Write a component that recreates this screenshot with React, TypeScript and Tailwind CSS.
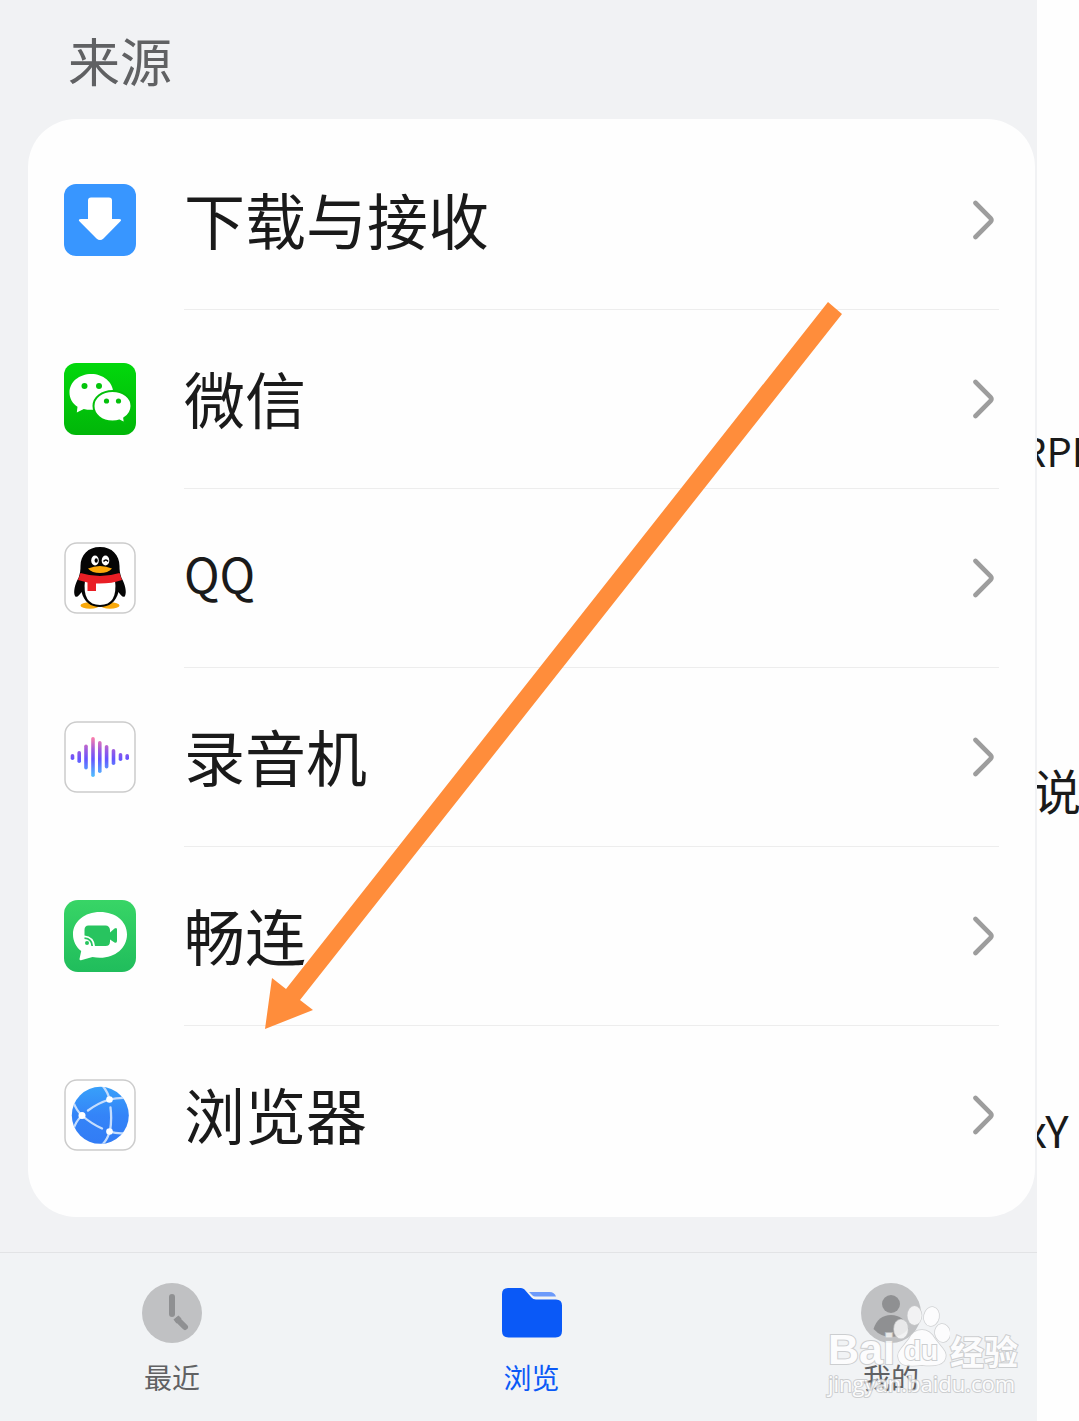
import type { ReactNode } from "react";

function DownloadIcon() {
  return (
    <svg viewBox="0 0 72 72" className="size-[72px] shrink-0" aria-hidden="true">
      <rect width="72" height="72" rx="12" fill="#3896ff" />
      <path
        d="M27 13.500h18q3 0 3 3V35h7q3.500 0 1.200 2.500L39.500 54.500q-3.500 3-7 0L15.600 37.500Q13.500 35 17 35h7V16.500q0-3 3-3Z"
        fill="#fff"
      />
    </svg>
  );
}

function WeChatIcon() {
  return (
    <svg viewBox="0 0 72 72" className="size-[72px] shrink-0" aria-hidden="true">
      <defs>
        <linearGradient id="wechat" x1="0" y1="0" x2="0" y2="1">
          <stop offset="0" stopColor="#02d80c" />
          <stop offset="1" stopColor="#01b609" />
        </linearGradient>
      </defs>
      <rect width="72" height="72" rx="12" fill="url(#wechat)" />
      <path
        d="M27.500 11C15 11 5.500 19 5.500 29.500c0 6 3 11 8 14.200L12.800 49.500l7-3.600c3 .8 6.200 1 9.500.8l20-17C49 19 39 11 27.500 11Z"
        fill="#fff"
      />
      <circle cx="20.500" cy="23" r="3" fill="#03c50b" />
      <circle cx="35" cy="23" r="3" fill="#03c50b" />
      <path
        d="M48.500 28C38 28 29.500 34.500 29.500 43s8 15.500 19 15.500c2.500 0 5-.3 7-1l5.500 3-.8-5.300C64.500 52.500 67.500 48 67.500 43c0-8.500-8.500-15-19-15Z"
        fill="#fff"
        stroke="#02bf0a"
        strokeWidth="2"
      />
      <circle cx="42.500" cy="38" r="2.600" fill="#03c00b" />
      <circle cx="54.500" cy="38" r="2.600" fill="#03c00b" />
    </svg>
  );
}

function QQIcon() {
  return (
    <svg viewBox="0 0 72 72" className="size-[72px] shrink-0" aria-hidden="true">
      <rect x="1" y="1" width="70" height="70" rx="12" fill="#fff" stroke="#ccc" strokeWidth="1.500" />
      <ellipse cx="26" cy="63.500" rx="9.500" ry="3.300" fill="#f9a90c" />
      <ellipse cx="46" cy="63.500" rx="9.500" ry="3.300" fill="#f9a90c" />
      <path
        d="M36 5C24 5 16.500 13 16.500 24c0 4-.3 7-2 12C11 42 9 50 11 54c1.600 2.500 4.500-1 6.500-4C20 60 27 65 36 65s16-5 18.500-15c2 3 5 6.500 6.500 4 2-4 0-12-3.500-18-1.700-5-2-8-2-12C55.500 13 48 5 36 5Z"
        fill="#050505"
      />
      <path d="M21 38h30q3 25-15 25T21 38Z" fill="#fff" />
      <path d="M16.500 31q19.500 6 39 0l2.500 7q-11 4-26 3.500v7.500h-8.500v-8.500L14 38Z" fill="#e91e25" />
      <ellipse cx="31" cy="18.500" rx="3.800" ry="5" fill="#fff" />
      <ellipse cx="41.500" cy="18.500" rx="3.800" ry="5" fill="#fff" />
      <ellipse cx="32.200" cy="18.500" rx="1.600" ry="2.300" fill="#000" />
      <path d="M39.500 19.500q2.500-3 4.500 0" fill="none" stroke="#000" strokeWidth="1.500" />
      <path d="M24 26.500q12-5 24 0-4 4.500-12 4.500t-12-4.500Z" fill="#fba80a" />
    </svg>
  );
}

const waveBars = [
  { x: 8.5, top: 34, bottom: 38 },
  { x: 15.2, top: 31, bottom: 41 },
  { x: 22, top: 24.5, bottom: 47.5 },
  { x: 29, top: 17, bottom: 55 },
  { x: 35.8, top: 21, bottom: 51 },
  { x: 42.6, top: 25, bottom: 46.5 },
  { x: 49.5, top: 29, bottom: 43 },
  { x: 56.5, top: 33, bottom: 39 },
  { x: 63.2, top: 34, bottom: 38 },
];

function RecorderIcon() {
  return (
    <svg viewBox="0 0 72 72" className="size-[72px] shrink-0" aria-hidden="true">
      <defs>
        <linearGradient id="wave" gradientUnits="userSpaceOnUse" x1="0" y1="16" x2="0" y2="56">
          <stop offset="0" stopColor="#ff7fa8" />
          <stop offset="0.300" stopColor="#a25ddc" />
          <stop offset="0.550" stopColor="#6653ff" />
          <stop offset="1" stopColor="#4fc3ff" />
        </linearGradient>
      </defs>
      <rect x="1" y="1" width="70" height="70" rx="12" fill="#fff" stroke="#ccc" strokeWidth="1.500" />
      {waveBars.map((bar) => (
        <rect
          key={bar.x}
          x={bar.x - 1.8}
          y={bar.top - 1}
          width="3.600"
          height={bar.bottom - bar.top + 2}
          rx="1.800"
          fill="url(#wave)"
        />
      ))}
    </svg>
  );
}

function MeeTimeIcon() {
  return (
    <svg viewBox="0 0 72 72" className="size-[72px] shrink-0" aria-hidden="true">
      <defs>
        <linearGradient id="meetime" x1="0" y1="0" x2="0" y2="1">
          <stop offset="0" stopColor="#38d566" />
          <stop offset="1" stopColor="#20bd5c" />
        </linearGradient>
      </defs>
      <rect width="72" height="72" rx="14" fill="url(#meetime)" />
      <path
        d="M36 12C20.500 12 9 21.500 9 34.500c0 6.500 3 12.500 8.200 16.500L15.500 59q0 1.500 1.500 1.200L28.500 57c2.500.5 5 .8 7.500.8 15.500 0 27-10 27-23.300S51.500 12 36 12Z"
        fill="#fff"
      />
      <path
        d="M24.500 25.500h17q4 0 4.500 4.500v2.500l4.500-4q2.500-1.500 2.500 1v11.500q0 2.500-2.500 1.500l-4.500-3v2q0 4.500-4.500 4.500H31q-1-9.500-10.500-10.500v-5.500q0-4.500 4-4.500Z"
        fill="#28c45f"
      />
      <circle cx="23" cy="43" r="2" fill="#28c45f" />
      <path d="M20.500 38.200q7.300.5 7.700 7.800" fill="none" stroke="#28c45f" strokeWidth="1.800" />
    </svg>
  );
}

function BrowserIcon() {
  return (
    <svg viewBox="0 0 72 72" className="size-[72px] shrink-0" aria-hidden="true">
      <defs>
        <linearGradient id="globe" x1="0" y1="0" x2="0" y2="1">
          <stop offset="0" stopColor="#38a0fa" />
          <stop offset="0.500" stopColor="#3484f8" />
          <stop offset="1" stopColor="#327cf5" />
        </linearGradient>
        <clipPath id="globe-clip">
          <circle cx="36.300" cy="36.300" r="28.500" />
        </clipPath>
      </defs>
      <rect x="1" y="1" width="70" height="70" rx="12" fill="#fff" stroke="#ccc" strokeWidth="1.500" />
      <circle cx="36.300" cy="36.300" r="28.500" fill="url(#globe)" />
      <g clipPath="url(#globe-clip)" fill="none" stroke="#c5ddfd" strokeWidth="2.300" strokeLinecap="round">
        <path d="M24 31.500q10-7.500 21.500-11M45.500 20.500Q44 13 38 6M45.500 20.500q8-2 18-1.500" />
        <path d="M18 36.500Q12 31 9 22M18 36.500Q11 43 9 52M18 36.500q9 8 20 13" />
        <path d="M46.500 28.500q1.500 12-.5 23.500M45.500 52.500q-1.500 7-7 13M45.500 52.500q8 2.500 17 1.500" />
      </g>
      <circle cx="45.500" cy="20.500" r="3.300" fill="#fff" />
      <circle cx="18" cy="36.500" r="3.500" fill="#fff" />
      <circle cx="45.500" cy="52.500" r="3.300" fill="#fff" />
    </svg>
  );
}

function Chevron() {
  return (
    <svg viewBox="0 0 24 42" className="h-[42px] w-6 shrink-0" fill="none" aria-hidden="true">
      <path
        d="M4.500 4 19.500 19Q21.300 21 19.500 23L4.500 38"
        stroke="#9d9d9d"
        strokeWidth="4.600"
        strokeLinecap="round"
      />
    </svg>
  );
}

const sources: { name: string; icon: ReactNode }[] = [
  { name: "下载与接收", icon: <DownloadIcon /> },
  { name: "微信", icon: <WeChatIcon /> },
  { name: "QQ", icon: <QQIcon /> },
  { name: "录音机", icon: <RecorderIcon /> },
  { name: "畅连", icon: <MeeTimeIcon /> },
  { name: "浏览器", icon: <BrowserIcon /> },
];

function ClockIcon() {
  return (
    <svg viewBox="0 0 60 60" className="size-[60px]" aria-hidden="true">
      <circle cx="30" cy="30" r="30" fill="#c0c1c3" />
      <path d="M30 14v17" stroke="#8f9092" strokeWidth="6" strokeLinecap="round" />
      <path d="m36 37 7 7" stroke="#8f9092" strokeWidth="6" strokeLinecap="round" />
      <path d="m31.500 36.500 5-4 3 3-5 5Z" fill="#8f9092" />
    </svg>
  );
}

function FolderIcon() {
  return (
    <svg viewBox="0 0 60 60" className="size-[60px]" aria-hidden="true">
      <path
        d="M6 5h13q2 0 3.500 1.500l7 8Q31 16.500 34 16.500h20q6 0 6 6V48q0 6.500-6.500 6.500h-47Q0 54.500 0 48V11q0-6 6-6Z"
        fill="#0a59f7"
      />
      <path d="M27 9h20.500q5 0 6.500 4.500H33q-1.500 0-2.500-1Z" fill="#6c9afa" />
    </svg>
  );
}

function PersonIcon() {
  return (
    <svg viewBox="0 0 60 60" className="size-[60px]" aria-hidden="true">
      <circle cx="30" cy="30" r="30" fill="#c0c1c3" />
      <circle cx="30" cy="21" r="9" fill="#8f9092" />
      <path d="M12.500 46Q17 32 30 32t17.500 14Q40 54 30 54t-17.500-8Z" fill="#8f9092" />
    </svg>
  );
}

const tabs = [
  { name: "最近", icon: <ClockIcon />, color: "text-[#606163]" },
  { name: "浏览", icon: <FolderIcon />, color: "text-[#0a59f7]" },
  { name: "我的", icon: <PersonIcon />, color: "text-[#606163]" },
];

function Watermark() {
  return (
    <div className="pointer-events-none absolute right-[59px] bottom-6 w-48 text-white opacity-80 [paint-order:stroke] [-webkit-text-stroke:2px_#c4c5c7]">
      <div className="flex h-[66px] items-end">
        <span className="w-[64px] font-['Liberation_Sans'] text-[43px] leading-10 font-bold">
          Bai
        </span>
        <div className="relative h-[66px] w-[58px]">
          <svg viewBox="0 0 58 66" className="h-[66px] w-[58px]" aria-hidden="true">
            <g fill="#fff" stroke="#c9cacc" strokeWidth="1.500">
              <ellipse cx="9" cy="26" rx="7" ry="9.500" />
              <ellipse cx="22.500" cy="12.500" rx="7" ry="9.500" />
              <ellipse cx="39.500" cy="13.500" rx="7.500" ry="9.500" transform="rotate(12 39.500 13.500)" />
              <ellipse cx="50.500" cy="30" rx="7.500" ry="9" transform="rotate(-8 50.500 30)" />
              <path d="M30 27q8 0 13 9l8 10q5 6 1 12-5 6-22 4-17 2-21-2-6-7 0-14l8-10q4-9 13-9Z" />
            </g>
          </svg>
          <span className="absolute inset-x-0 bottom-1 text-center font-['Liberation_Sans'] text-[28px] leading-7 font-bold">
            du
          </span>
        </div>
        <span className="text-[34px] leading-9 font-bold whitespace-nowrap">经验</span>
      </div>
      <div className="font-['Open_Sans'] text-[22px] leading-7 whitespace-nowrap">jingyan.baidu.com</div>
    </div>
  );
}

export default function App() {
  return (
    <div className="relative flex min-h-screen w-full overflow-hidden bg-[#fefefe] font-['Noto_Sans_CJK_SC',sans-serif] text-[#1a1a1a]">
      <div className="flex min-w-0 flex-1 flex-col bg-[#f1f2f4]">
        <h1 className="px-[68px] pt-5 pb-[19px] text-[52px] leading-20 text-[#606163]">来源</h1>

        <ul className="mr-0.5 ml-7 rounded-[48px] bg-[#fefefe] py-3">
          {sources.map((source) => (
            <li key={source.name} className="group">
              <button type="button" className="flex h-[179px] w-full items-center pl-9 text-left">
                <span className="pb-0.5">{source.icon}</span>
                <span className="mr-9 ml-12 flex h-full min-w-0 flex-1 items-center justify-between border-b border-[#ededed] group-last:border-transparent">
                  <span
                    className={
                      source.name === "QQ" ? "pb-3 text-5xl leading-20" : "pb-0.5 text-[61px] leading-20"
                    }
                  >
                    {source.name}
                  </span>
                  <span className="pr-1">
                    <Chevron />
                  </span>
                </span>
              </button>
            </li>
          ))}
        </ul>

        <nav className="mt-[35px] flex flex-1 items-start justify-between border-t border-[#e2e3e5] bg-[#f1f3f5] pt-[30px] pr-[116px] pb-6 pl-[142px]">
          {tabs.map((tab) => (
            <button
              key={tab.name}
              type="button"
              className={`flex w-[60px] flex-col items-center gap-4 text-[28px] leading-9 ${tab.color}`}
            >
              {tab.icon}
              <span>{tab.name}</span>
            </button>
          ))}
        </nav>
      </div>

      <aside className="flex w-[42px] shrink-0 flex-col overflow-hidden pt-[420px] whitespace-nowrap">
        <p className="-ml-4 text-[40px] leading-[60px]">RPD</p>
        <p className="mt-[279px] -ml-1 text-5xl leading-[60px]">说</p>
        <p className="mt-[280px] -ml-3 text-[44px] leading-[60px]">xY</p>
      </aside>

      <svg
        viewBox="0 0 580 730"
        className="pointer-events-none absolute top-[300px] left-[264px] h-[730px] w-[580px]"
        aria-hidden="true"
      >
        <path d="M564 2 578 14 36 700 49 710 1 729 8 678 22 689Z" fill="#ff8d3b" />
      </svg>

      <Watermark />
    </div>
  );
}
